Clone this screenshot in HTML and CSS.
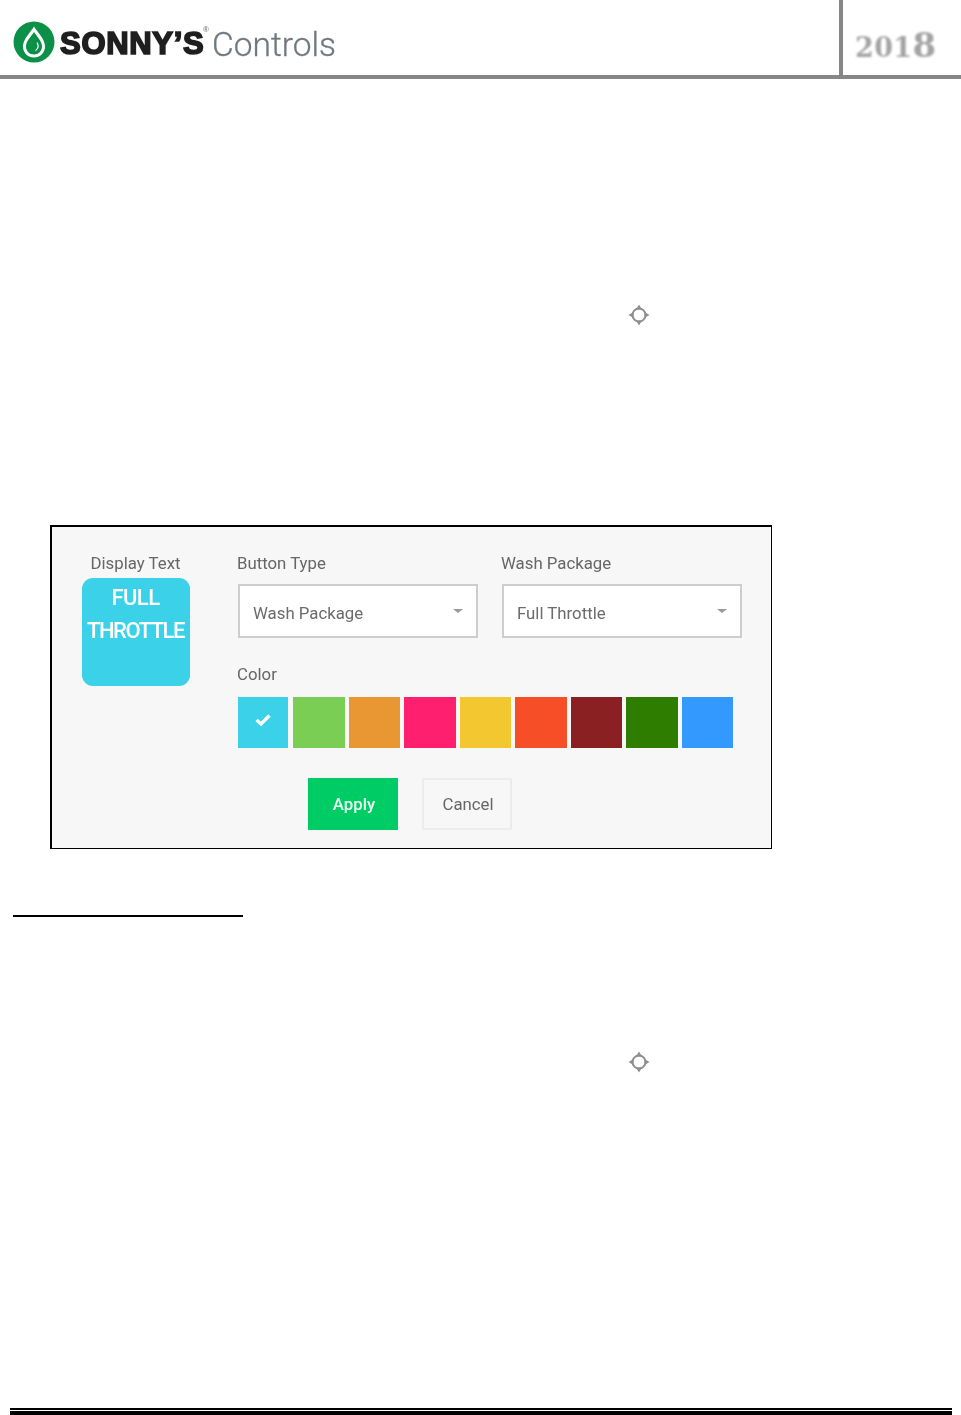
FILE: index.html
```html
<!DOCTYPE html>
<html lang="en">
<head>
<meta charset="utf-8">
<title>Sonny's Controls 2018</title>
<link rel="stylesheet" href="styles.css">
</head>
<body>
<header class="page-header">
  <div class="logo">
    <svg class="logo-mark" width="44" height="44" viewBox="0 0 44 44" aria-hidden="true">
      <circle cx="22" cy="22" r="20.5" fill="#0c8f46"/>
      <path d="M22 6.500C18 13 11 19 11 26.500C11 33 16 37.500 22 37.500C28 37.500 33 33 33 26.500C33 19 26 13 22 6.500Z" fill="#fff"/>
      <path d="M22 12C19 17 14 21 14 26.500C14 31 17.500 34.500 22 34.500C26.500 34.500 30 31 30 26.500C30 21 25 17 22 12Z" fill="#0c8f46"/>
      <path d="M25 22.500C26.800 25.500 26.500 28.500 23.500 30.500" fill="none" stroke="#fff" stroke-width="1.200"/>
    </svg>
    <span class="logo-brand">SONNY’S<sup class="logo-reg">®</sup></span>
    <span class="logo-product">Controls</span>
  </div>
  <div class="year-box"><div class="year"><span class="year-low">201</span><span class="year-high">8</span></div></div>
</header>

<main class="page-main">
  <svg class="target target-first" width="22" height="22" viewBox="0 0 22 22" aria-hidden="true">
    <circle cx="11" cy="11" r="6.500" fill="none" stroke="#8f8f8f" stroke-width="2"/>
    <path d="M11 0.500L14 5.500H8ZM11 21.500L8 16.500H14ZM0.500 11L5.500 8V14ZM21.500 11L16.500 14V8Z" fill="#8f8f8f"/>
  </svg>

  <section class="panel">
    <div class="display-col">
      <div class="label label-center">Display Text</div>
      <div class="tile"><span class="tile-short">FULL</span><span class="tile-long">THROTTLE</span></div>
    </div>
    <div class="form-col">
      <div class="select-row">
        <div class="field">
          <div class="label">Button Type</div>
          <div class="select"><span>Wash Package</span><i class="caret"></i></div>
        </div>
        <div class="field">
          <div class="label">Wash Package</div>
          <div class="select"><span>Full Throttle</span><i class="caret"></i></div>
        </div>
      </div>
      <div class="label label-color">Color</div>
      <div class="swatches">
        <div class="swatch swatch-first c-cyan">
          <svg class="check" width="18" height="14" viewBox="0 0 18 14" aria-hidden="true"><path d="M2.500 7L7 11L15.500 2.500" fill="none" stroke="#fff" stroke-width="3.400"/></svg>
        </div>
        <div class="swatch c-green"></div>
        <div class="swatch c-orange"></div>
        <div class="swatch c-pink"></div>
        <div class="swatch c-yellow"></div>
        <div class="swatch c-red"></div>
        <div class="swatch c-maroon"></div>
        <div class="swatch c-forest"></div>
        <div class="swatch c-blue"></div>
      </div>
      <div class="actions">
        <button class="btn btn-apply" type="button">Apply</button>
        <button class="btn btn-cancel" type="button">Cancel</button>
      </div>
    </div>
  </section>

  <div class="heading-rule"></div>

  <svg class="target target-second" width="22" height="22" viewBox="0 0 22 22" aria-hidden="true">
    <circle cx="11" cy="11" r="6.500" fill="none" stroke="#8f8f8f" stroke-width="2"/>
    <path d="M11 0.500L14 5.500H8ZM11 21.500L8 16.500H14ZM0.500 11L5.500 8V14ZM21.500 11L16.500 14V8Z" fill="#8f8f8f"/>
  </svg>
</main>

<footer class="page-footer"></footer>
</body>
</html>
```
FILE: styles.css
```css
* { box-sizing: border-box; }
html, body { margin: 0; padding: 0; }
body {
  width: 961px;
  height: 1415px;
  overflow: hidden;
  display: flex;
  flex-direction: column;
  background: #fff;
  font-family: Roboto, "Liberation Sans", sans-serif;
}

/* header */
.page-header {
  height: 79px;
  flex: none;
  display: flex;
  border-bottom: 4px solid #868686;
}
.logo {
  width: 839px;
  display: flex;
  align-items: center;
  padding-left: 12px;
  padding-top: 9px;
  filter: blur(0.4px);
}
.logo-mark { flex: none; }
.logo-brand {
  margin-left: 4px;
  width: 147px;
  font-family: "Liberation Sans", sans-serif;
  font-weight: 700;
  font-size: 31px;
  letter-spacing: 0.7px;
  color: #1f1f1f;
  -webkit-text-stroke: 1.700px #1f1f1f;
  position: relative;
  top: 2px;
  white-space: nowrap;
}
.logo-reg {
  position: absolute;
  top: 0;
  right: -2px;
  font-size: 8px;
  line-height: 8px;
  font-weight: 400;
  letter-spacing: 0;
  -webkit-text-stroke: 0;
  color: #666;
}
.logo-product {
  margin-left: 5px;
  font-family: Roboto, sans-serif;
  font-weight: 300;
  font-size: 33.500px;
  letter-spacing: 0;
  color: #6f7780;
  -webkit-text-stroke: 0.3px #6f7780;
  position: relative;
  top: 2px;
}
.year-box {
  flex: 1;
  border-left: 4px solid #868686;
}
.year {
  padding: 26px 0 0 12px;
  font-family: "DejaVu Serif", serif;
  font-weight: 700;
  color: #a3a3a3;
  filter: blur(0.8px);
  line-height: 38px;
  white-space: nowrap;
}
.year-low { font-size: 27px; letter-spacing: 0.4px; }
.year-high { font-size: 34px; }

/* main */
.page-main {
  flex: 1;
  display: flex;
  flex-direction: column;
  align-items: flex-start;
}
.target { display: block; filter: blur(0.6px); }
.target-first { margin: 225px 0 0 628px; }
.target-second { margin: 134px 0 0 628px; }

/* panel */
.panel {
  margin: 199px 0 0 50px;
  width: 722px;
  height: 324px;
  border: solid #000;
  border-width: 2px 1px 1px 2px;
  background: #f7f7f7;
  display: flex;
  padding-top: 26px;
  padding-left: 30px;
  color: #666;
}
.panel > * { filter: blur(0.4px); }
.label { font-size: 16.800px; line-height: 20px; color: #666; white-space: nowrap; }
.label-center { text-align: center; margin-left: -1px; }
.display-col { width: 108px; flex: none; }
.tile {
  width: 108px;
  height: 108px;
  margin-top: 5px;
  border-radius: 11px;
  background: #3bd1e8;
  color: #fff;
  display: flex;
  flex-direction: column;
  align-items: center;
  font-size: 22px;
  font-weight: 500;
  line-height: 33px;
  padding-top: 3px;
}
.tile-short { letter-spacing: -0.6px; margin-left: -1px; }
.tile-long { letter-spacing: -1.500px; margin-left: -1px; }
.form-col { margin-left: 47px; width: 506px; }
.select-row { display: flex; gap: 22px; }
.field { width: 242px; }
.select {
  margin-top: 11px;
  margin-left: 1px;
  width: 240px;
  height: 54px;
  border: 2px solid #cdcdcd;
  background: #fff;
  display: flex;
  align-items: center;
  justify-content: space-between;
  padding: 3px 13px 0 13px;
  font-size: 16.800px;
  color: #6b6b6b;
}
.caret {
  width: 0;
  height: 0;
  margin-top: -4px;
  border-left: 5px solid transparent;
  border-right: 5px solid transparent;
  border-top: 4px solid #999;
}
.label-color { margin-top: 26px; }
.swatches {
  display: flex;
  gap: 4px;
  margin: 13px 0 0 1px;
}
.swatch {
  width: 51.500px;
  height: 51px;
  display: flex;
  align-items: center;
  justify-content: center;
}
.swatch-first { width: 50px; margin-right: 1px; }
.check { margin-top: -6px; }
.c-cyan { background: #3bd1e8; }
.c-green { background: #7ace54; }
.c-orange { background: #e99733; }
.c-pink { background: #ff1f6e; }
.c-yellow { background: #f2c730; }
.c-red { background: #f64f27; }
.c-maroon { background: #8b2022; }
.c-forest { background: #2f7d00; }
.c-blue { background: #3399ff; }

.actions {
  display: flex;
  gap: 24px;
  margin: 30px 0 0 71px;
}
.btn {
  width: 90px;
  height: 52px;
  padding: 0 0 0 2px;
  font-family: Roboto, sans-serif;
  font-size: 16.800px;
  border-radius: 0;
}
.btn-apply { background: #00cc66; border: 0; color: #e8fff2; font-weight: 500; }
.btn-cancel { background: #f7f7f7; border: 2px solid #ececec; color: #666; }

.heading-rule {
  width: 230px;
  height: 2px;
  margin: 66px 0 0 13px;
  background: #000;
}

/* footer */
.page-footer {
  flex: none;
  margin: 0 9px 0 10px;
  height: 7px;
  border-top: 2px solid #000;
  border-bottom: 4px solid #000;
}
```
